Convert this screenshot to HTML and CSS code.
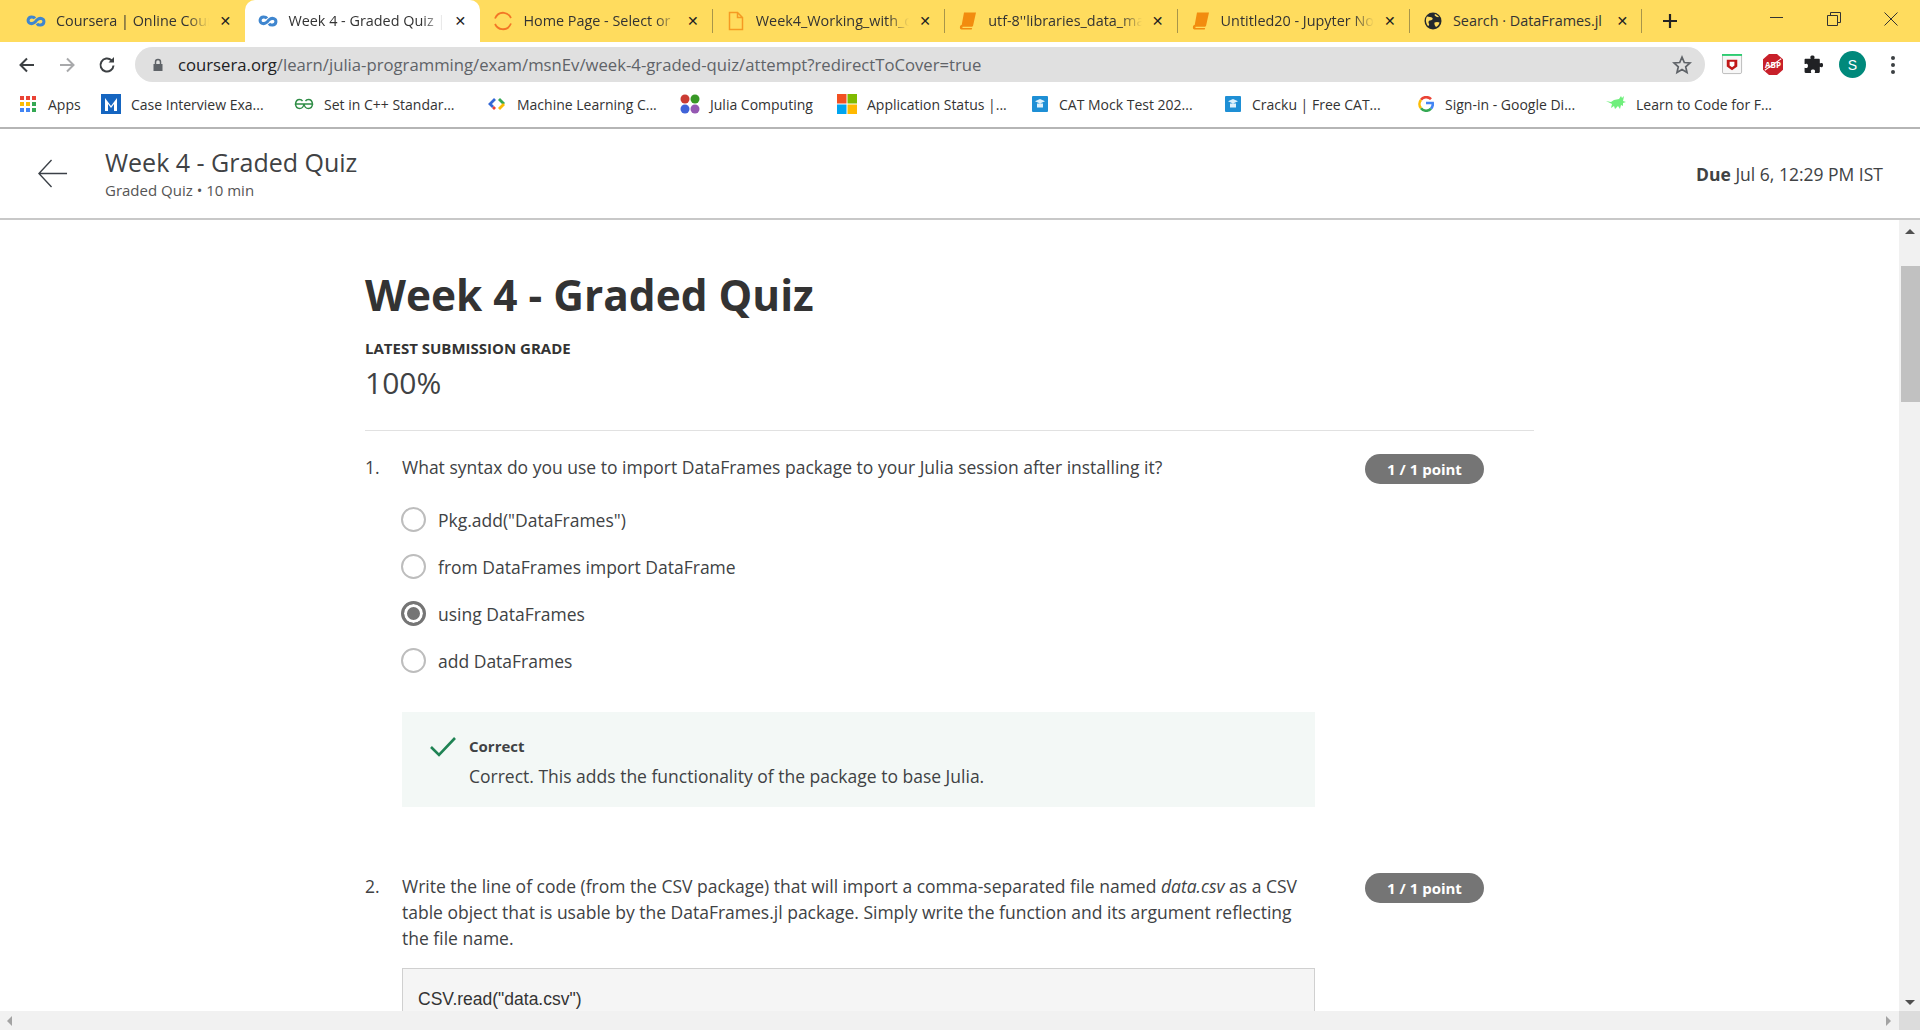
FILE: index.html
```html
<!DOCTYPE html>
<html lang="en">
<head>
    <meta charset="UTF-8">
    <title>Week 4 - Graded Quiz | Coursera</title>
    <link rel="stylesheet" href="styles.css">
</head>
<body>

    <div class="tabstrip">
        <div class="tab">
            <svg class="tab-icon" viewBox="0 0 20 20"><path class="infinity" d="M9 7.4C7.8 5.6 3 4.8 2.2 8.6c-.7 3.6 3.6 5.4 6.8 2.6l2-2.4c3.200-2.800 7.500-1 6.800 2.600-.8 3.800-5.600 3-6.800 1.200"/></svg>
            <span class="tab-title">Coursera | Online Cour</span>
            <span class="tab-close">✕</span>
        </div>
        <div class="tab tab-active">
            <svg class="tab-icon" viewBox="0 0 20 20"><path class="infinity" d="M9 7.4C7.8 5.6 3 4.8 2.2 8.6c-.7 3.6 3.6 5.4 6.8 2.6l2-2.4c3.200-2.800 7.500-1 6.800 2.600-.8 3.800-5.600 3-6.800 1.200"/></svg>
            <span class="tab-title">Week 4 - Graded Quiz |</span>
            <span class="tab-close">✕</span>
        </div>
        <div class="tab">
            <svg class="tab-icon" viewBox="0 0 20 20"><path class="swirl" d="M2 7.500C4 3 8 1.500 11 1.800c3 .3 5.500 2.200 7 5.200M18 12.500c-2 4.500-6 6-9 5.700-3-.3-5.500-2.200-7-5.200"/></svg>
            <span class="tab-title">Home Page - Select or</span>
            <span class="tab-close">✕</span>
        </div>
        <div class="tab">
            <svg class="tab-icon" viewBox="0 0 20 20"><path class="doc" d="M3.500 1.500h8l5 5v12h-13zM11.500 1.500v5h5"/></svg>
            <span class="tab-title">Week4_Working_with_c</span>
            <span class="tab-close">✕</span>
        </div>
        <div class="tab">
            <svg class="tab-icon" viewBox="0 0 20 20"><path class="book" d="M6 1.500h12l-3 13.500H3.500zM2 15.500c0-1 1-1.500 2-1.500h11l-.6 1.700H4.500l-.1 1.300h9.700l-.4 1.500H3.500C2.500 18.500 1.500 17.500 2 15.500z"/></svg>
            <span class="tab-title">utf-8''libraries_data_ma</span>
            <span class="tab-close">✕</span>
        </div>
        <div class="tab">
            <svg class="tab-icon" viewBox="0 0 20 20"><path class="book" d="M6 1.500h12l-3 13.500H3.500zM2 15.500c0-1 1-1.500 2-1.500h11l-.6 1.700H4.500l-.1 1.300h9.700l-.4 1.500H3.500C2.500 18.500 1.500 17.500 2 15.500z"/></svg>
            <span class="tab-title">Untitled20 - Jupyter No</span>
            <span class="tab-close">✕</span>
        </div>
        <div class="tab">
            <svg class="tab-icon" viewBox="0 0 20 20"><circle cx="10" cy="10" r="8.500" fill="#24292e"/><path fill="#ffdc5e" d="M4 5.500c2 .5 4 0 5.500 1.500.8 1.500-1 2.500-2.500 2.500S5 11.500 6 13c.5 1-.5 2-1 2C2.500 12 2.500 8 4 5.500zM12 3c1.500.5 3 1.500 4 3-1.500.5-3-.5-4-1.200-.5-.5-.5-1.300 0-1.800zM11.500 11.500c1.500-.8 3.500-.8 5 0-.4 2.200-1.800 3.700-3.500 4.500-1-1-2-3-1.500-4.500z"/></svg>
            <span class="tab-title tab-title-full">Search · DataFrames.jl</span>
            <span class="tab-close">✕</span>
        </div>
        <span class="new-tab">
            <svg viewBox="0 0 16 16"><path d="M8 1v14M1 8h14"/></svg>
        </span>
        <div class="window-controls">
            <svg viewBox="0 0 14 14"><path d="M0 5.500h13"/></svg>
            <svg viewBox="0 0 14 14"><path d="M.5 3.500h10v10H.5zM3.500 3.500V.5h10v10h-3"/></svg>
            <svg viewBox="0 0 14 14"><path d="M.5.5l13 13M13.500.5l-13 13"/></svg>
        </div>
    </div>

    <div class="toolbar">
        <svg class="nav-icon" viewBox="0 0 20 20"><path d="M17 10H4M10 3.500 3.500 10l6.500 6.500"/></svg>
        <svg class="nav-icon nav-disabled" viewBox="0 0 20 20"><path d="M3 10h13M10 3.500l6.500 6.500-6.500 6.500"/></svg>
        <svg class="nav-icon" viewBox="0 0 20 20"><path d="M16.500 10.500a6.500 6.500 0 1 1-2-5.200"/><path class="fill" d="M11.500 7.500H17V2z"/></svg>
        <div class="omnibox">
            <svg class="lock" viewBox="0 0 12 14"><path d="M1.500 6h9v7h-9z"/><path class="shackle" d="M3.500 6V4a2.500 2.500 0 0 1 5 0v2"/></svg>
            <span class="url"><span class="url-host">coursera.org</span>/learn/julia-programming/exam/msnEv/week-4-graded-quiz/attempt?redirectToCover=true</span>
            <svg class="star" viewBox="0 0 20 20"><path d="M10 2.200l2.300 5.300 5.700.5-4.300 3.800 1.300 5.600-5-3-5 3 1.300-5.600L2 8l5.700-.5z"/></svg>
        </div>
        <div class="extensions">
            <svg class="ext-icon" viewBox="0 0 22 22"><rect x=".5" y=".5" width="20" height="20" rx="1.500" fill="#f7f7f7" stroke="#bbb"/><path d="M0 0h21v2H0z" fill="#2ecc71"/><path d="M5 6h11v7l-5.500 4L5 13z" fill="#c01818"/><path d="M8 8h5v4l-2.500 2L8 12z" fill="#fff"/></svg>
            <span class="abp">ABP</span>
            <svg class="ext-icon" viewBox="0 0 20 20"><path fill="#202124" d="M7 2.500c.5-1.500 3.500-1.500 4 0 .2.700-.3 1.200-.3 2h4.300c.6 0 1 .4 1 1v3.300c.8 0 1.300-.5 2-.3 1.500.5 1.500 3.500 0 4-.7.200-1.200-.3-2-.3V17c0 .6-.4 1-1 1h-3.800c0-.8.500-1.300.300-2-.5-1.500-3.500-1.500-4 0-.2.700.3 1.200.3 2H2.500c-.6 0-1-.4-1-1v-4c.8 0 1.400.500 2.100.300 1.500-.5 1.500-3.500 0-4C2.900 9.100 2.300 9.600 1.500 9.600V5.500c0-.6.400-1 1-1H7.300C7.300 3.700 6.800 3.200 7 2.500z"/></svg>
            <span class="avatar">S</span>
            <span class="menu-dots"><i></i><i></i><i></i></span>
        </div>
    </div>

    <div class="bookmarks">
        <div class="bookmark bookmark-apps">
            <svg viewBox="0 0 16 16"><g fill="#ea4335"><rect width="4" height="4"/><rect x="6" width="4" height="4"/><rect x="12" width="4" height="4"/></g><g fill="#fbbc05"><rect y="6" width="4" height="4"/><rect x="6" y="6" width="4" height="4"/></g><rect x="12" y="6" width="4" height="4" fill="#34a853"/><g fill="#4285f4"><rect y="12" width="4" height="4"/><rect x="6" y="12" width="4" height="4"/></g><rect x="12" y="12" width="4" height="4" fill="#34a853"/></svg>
            <span>Apps</span>
        </div>
        <div class="bookmark">
            <svg viewBox="0 0 20 20"><rect width="20" height="20" fill="#1565c0"/><path d="M4 17V4l6 8 6-8v13h-3V10l-3 4-3-4v7z" fill="#fff"/></svg>
            <span>Case Interview Exa...</span>
        </div>
        <div class="bookmark">
            <svg viewBox="0 0 20 20" fill="none" stroke="#2f8d46" stroke-width="1.500"><path d="M10 10H1.500c.3-3 2-4.500 4-4.500 1.500 0 2.500.7 3 1.700M1.500 10c.3 3 2 4.500 4 4.500S9.500 13 10 10M10 10h8.500c-.3-3-2-4.500-4-4.500-1.500 0-2.500.7-3 1.700M18.500 10c-.3 3-2 4.500-4 4.500S10.500 13 10 10"/></svg>
            <span>Set in C++ Standar...</span>
        </div>
        <div class="bookmark">
            <svg viewBox="0 0 20 20" fill="none" stroke-width="2.800"><path d="M8 5 3 10l3 3" stroke="#3367d6"/><path d="M6 13l2 2" stroke="#ea4335"/><path d="M12 5l5 5" stroke="#34a853"/><path d="M17 10l-5 5" stroke="#fbbc05"/></svg>
            <span>Machine Learning C...</span>
        </div>
        <div class="bookmark bookmark-short">
            <svg viewBox="0 0 20 20"><circle cx="5" cy="5" r="4.500" fill="#cb3c33"/><circle cx="15" cy="5" r="4.500" fill="#389826"/><circle cx="5" cy="15" r="4.500" fill="#4063d8"/><circle cx="15" cy="15" r="4.500" fill="#9558b2"/></svg>
            <span>Julia Computing</span>
        </div>
        <div class="bookmark">
            <svg viewBox="0 0 20 20"><rect width="9.500" height="9.500" fill="#f25022"/><rect x="10.500" width="9.500" height="9.500" fill="#7fba00"/><rect y="10.500" width="9.500" height="9.500" fill="#00a4ef"/><rect x="10.500" y="10.500" width="9.500" height="9.500" fill="#ffb900"/></svg>
            <span>Application Status |...</span>
        </div>
        <div class="bookmark bookmark-small">
            <svg viewBox="0 0 16 16"><rect width="16" height="16" rx="1" fill="#1e8fd5"/><path d="M8 3l5 2.200-5 2.200-5-2.200zM5 7.500h6v4H5z" fill="#dff1fb"/></svg>
            <span>CAT Mock Test 202...</span>
        </div>
        <div class="bookmark bookmark-small">
            <svg viewBox="0 0 16 16"><rect width="16" height="16" rx="1" fill="#1e8fd5"/><path d="M8 3l5 2.200-5 2.200-5-2.200zM5 7.500h6v4H5z" fill="#dff1fb"/></svg>
            <span>Cracku | Free CAT...</span>
        </div>
        <div class="bookmark bookmark-small bookmark-google">
            <svg viewBox="0 0 16 16" fill="none" stroke-width="2.600"><path d="M13 3.200A6.500 6.500 0 0 0 3 3.800" stroke="#ea4335"/><path d="M3 3.800a6.500 6.500 0 0 0 0 8.400" stroke="#fbbc05"/><path d="M3 12.200a6.500 6.500 0 0 0 10 .4" stroke="#34a853"/><path d="M13 12.600A6.500 6.500 0 0 0 14.700 7H8" stroke="#4285f4"/></svg>
            <span>Sign-in - Google Di...</span>
        </div>
        <div class="bookmark">
            <svg viewBox="0 0 20 16"><path fill="#6fef7c" d="M0 5l5 1 3-2 5-1 2-3 1 2 2-2-1 5 3 1-3 1v3l-2-1-1 4-2-3-3 3-1-3-3 2 1-4z"/></svg>
            <span>Learn to Code for F...</span>
        </div>
    </div>

    <header class="page-header">
        <svg class="back-arrow" viewBox="0 0 32 32"><path d="M31 16H2M15 2 2 16l13 14"/></svg>
        <div class="page-heading">
            <div class="page-title">Week 4 - Graded Quiz</div>
            <div class="page-subtitle">Graded Quiz • 10 min</div>
        </div>
        <div class="due"><b>Due</b> Jul 6, 12:29 PM IST</div>
    </header>

    <div class="viewport">
        <main class="content">
            <h1>Week 4 - Graded Quiz</h1>
            <div class="grade-label">LATEST SUBMISSION GRADE</div>
            <div class="grade-value">100%</div>
            <hr class="rule">

            <section class="question">
                <div class="question-num">1.</div>
                <div class="question-body">
                    <p class="question-text">What syntax do you use to import DataFrames package to your Julia session after installing it?</p>
                    <div class="options">
                        <div class="option"><span class="radio"></span>Pkg.add("DataFrames")</div>
                        <div class="option"><span class="radio"></span>from DataFrames import DataFrame</div>
                        <div class="option"><span class="radio radio-on"></span>using DataFrames</div>
                        <div class="option"><span class="radio"></span>add DataFrames</div>
                    </div>
                    <div class="feedback">
                        <svg class="check" viewBox="0 0 26 20"><path d="M1 10l8 8L25 1"/></svg>
                        <div>
                            <div class="feedback-title">Correct</div>
                            <div class="feedback-text">Correct. This adds the functionality of the package to base Julia.</div>
                        </div>
                    </div>
                </div>
                <span class="points">1 / 1 point</span>
            </section>

            <section class="question question-second">
                <div class="question-num">2.</div>
                <div class="question-body">
                    <p class="question-text">Write the line of code (from the CSV package) that will import a comma-separated file named <em>data.csv</em> as a CSV table object that is usable by the DataFrames.jl package. Simply write the function and its argument reflecting the file name.</p>
                    <div class="answer-box">CSV.read("data.csv")</div>
                </div>
                <span class="points">1 / 1 point</span>
            </section>
        </main>
        <div class="scrollbar-v">
            <span class="arrow-up"></span>
            <span class="thumb"></span>
            <span class="arrow-down"></span>
        </div>
    </div>

    <div class="scrollbar-h">
        <span class="arrow-left"></span>
        <span class="arrow-right"></span>
        <span class="corner"></span>
    </div>

</body>
</html>
```

FILE: styles.css
```css
* { box-sizing: border-box; }
html, body { height: 100%; }
body {
    margin: 0;
    display: flex;
    flex-direction: column;
    overflow: hidden;
    background: #fff;
    color: #404244;
    font-family: 'Open Sans', sans-serif;
}

/* browser chrome */
.tabstrip { display: flex; align-items: stretch; height: 42px; flex: none; padding-left: 13px; background: #ffdc5e; }
.tab { position: relative; display: flex; align-items: center; width: 232.4px; padding: 0 12px 1px 13px; color: #333; font-size: 14.4px; }
.tab::after { content: ""; position: absolute; right: 0; top: 9px; width: 1px; height: 24px; background: #a8954a; }
.tab:first-child::after, .tab-active::after { display: none; }
.tab-active { width: 235px; background: #fff; border-radius: 10px 10px 0 0; }
.tab-icon { width: 20px; height: 20px; flex: none; }
.infinity { fill: none; stroke: #3f86cf; stroke-width: 3; }
.swirl { fill: none; stroke: #f37626; stroke-width: 1.800; }
.doc { fill: none; stroke: #f59a23; stroke-width: 1.500; }
.book { fill: #f28c0f; }
.tab-title {
    flex: 1;
    min-width: 0;
    margin-left: 10px;
    white-space: nowrap;
    -webkit-mask-image: linear-gradient(to right, #000 86%, transparent 100%);
    mask-image: linear-gradient(to right, #000 86%, transparent 100%);
}
.tab-title-full { -webkit-mask-image: none; mask-image: none; }
.tab-close { width: 16px; margin-left: 8px; flex: none; text-align: center; font-size: 14px; font-weight: 700; color: #222; font-family: 'DejaVu Sans', sans-serif; }
.new-tab { display: flex; align-items: center; margin-left: 20px; }
.new-tab svg { width: 16px; height: 16px; fill: none; stroke: #222; stroke-width: 2.200; }
.window-controls { display: flex; gap: 43px; margin-left: auto; padding: 12px 22px 0 0; }
.window-controls svg { width: 14px; height: 14px; fill: none; stroke: #333; stroke-width: 1; }

.toolbar { display: flex; align-items: center; height: 43px; flex: none; padding: 2px 0 0 17px; background: #fff; }
.nav-icon { width: 20px; height: 20px; margin-right: 20px; fill: none; stroke: #3c4043; stroke-width: 2; flex: none; }
.nav-icon .fill { fill: #3c4043; stroke: none; }
.nav-disabled { stroke: #a8a9ab; }
.omnibox { display: flex; align-items: center; width: 1570px; height: 35px; margin-left: -2px; padding: 0 13px 0 17px; background: #e0e0e0; border-radius: 18px; }
.lock { width: 12px; height: 14px; flex: none; fill: #5f6368; }
.lock .shackle { fill: none; stroke: #5f6368; stroke-width: 1.500; }
.url { flex: 1; margin-left: 14px; font-size: 16.7px; color: #5f6368; white-space: nowrap; }
.url-host { color: #202124; }
.star { width: 20px; height: 20px; fill: none; stroke: #5f6368; stroke-width: 1.700; flex: none; }
.extensions { display: flex; align-items: center; margin-left: 17px; }
.ext-icon { width: 21px; height: 21px; flex: none; }
.abp { position: relative; display: flex; align-items: center; justify-content: center; width: 20px; height: 21px; margin-left: 20px; margin-right: 20px; background: #c8202a; color: #fff; font-size: 8px; font-weight: 700; clip-path: polygon(30% 0, 70% 0, 100% 25%, 100% 75%, 70% 100%, 30% 100%, 0 75%, 0 25%); }
.abp::after { content: ""; position: absolute; left: 0; right: 0; top: 10px; height: 1px; background: #fff; transform: rotate(-35deg); }
.avatar { display: flex; align-items: center; justify-content: center; width: 27px; height: 27px; margin-left: 15px; border-radius: 50%; background: #00897b; color: #fff; font-size: 14px; font-family: 'Liberation Sans', sans-serif; }
.menu-dots { display: flex; flex-direction: column; gap: 3px; margin-left: 25px; }
.menu-dots i { display: block; width: 4px; height: 4px; border-radius: 50%; background: #3c4043; }

.bookmarks { display: flex; align-items: center; height: 44px; flex: none; padding: 0 0 4px 20px; border-bottom: 2px solid #b5b5b5; font-size: 14px; color: #333; }
.bookmark { display: flex; align-items: center; width: 193px; flex: none; white-space: nowrap; }
.bookmark svg { width: 20px; height: 20px; margin-right: 10px; flex: none; }
.bookmark-apps { width: 81px; }
.bookmark-apps svg { width: 16px; height: 16px; margin-right: 12px; }
.bookmark-short { width: 157px; }
.bookmark-small svg { width: 16px; height: 16px; margin-left: 2px; margin-right: 11px; }
.bookmark-google { width: 190px; }

/* page header */
.page-header { display: flex; align-items: center; height: 91px; flex: none; padding: 0 37px 0 37px; border-bottom: 2px solid #c8c8c8; }
.back-arrow { width: 31px; height: 31px; fill: none; stroke: #3b4047; stroke-width: 1.400; flex: none; }
.page-heading { margin-left: 37px; margin-bottom: 2px; }
.page-title { font-size: 25px; line-height: 32px; }
.page-subtitle { margin-top: 2px; font-size: 15px; line-height: 20px; color: #555; }
.due { margin-left: auto; font-size: 17.5px; }

/* quiz */
.viewport { display: flex; flex: 1; min-height: 0; overflow: hidden; }
.content { flex: 1; min-width: 0; }
.content > * { width: 1169px; margin-left: auto; margin-right: auto; }
h1 { margin-top: 50px; margin-bottom: 0; font-size: 42.4px; line-height: 50px; font-weight: 700; color: #333; }
.grade-label { margin-top: 18px; font-size: 15px; line-height: 20px; font-weight: 700; color: #333; }
.grade-value { margin-top: 5px; font-size: 30px; line-height: 40px; }
.rule { margin-top: 27px; margin-bottom: 0; border: 0; border-top: 1px solid #e1e1e1; }

.question { display: flex; align-items: flex-start; margin-top: 23px; }
.question-second { margin-top: 66px; }
.question-num { width: 37px; flex: none; font-size: 17.5px; line-height: 26px; }
.question-body { width: 913px; flex: none; }
.question-text { margin: 0; font-size: 17.5px; line-height: 26px; }
.points { display: flex; align-items: center; justify-content: center; width: 119px; height: 30px; margin-left: 50px; border-radius: 15px; background: #757575; color: #fff; font-size: 15px; font-weight: 700; flex: none; }

.options { margin-top: 16px; }
.option { display: flex; align-items: center; height: 47px; font-size: 17.5px; }
.radio { width: 25px; height: 25px; margin-right: 12px; margin-left: -1px; border: 2px solid #bdbdbd; border-radius: 50%; flex: none; }
.radio-on { border: 3px solid #757575; background: #757575; box-shadow: inset 0 0 0 3px #fff; }

.feedback { display: flex; height: 95px; margin-top: 28px; padding: 22px 0 0 28px; background: #f3f8f6; }
.check { width: 26px; height: 20px; margin-top: 3px; margin-right: 13px; fill: none; stroke: #1f8354; stroke-width: 2.600; flex: none; }
.feedback-title { font-size: 15px; line-height: 24px; font-weight: 700; }
.feedback-text { margin-top: 6px; font-size: 17.5px; line-height: 24px; }

.answer-box { height: 80px; margin-top: 17px; padding: 18px 15px; border: 1px solid #d0d0d0; background: #f5f5f5; font-family: 'Liberation Sans', sans-serif; font-size: 17.5px; line-height: 24px; color: #333; }

/* scrollbars */
.scrollbar-v { position: relative; width: 21px; flex: none; background: #f1f1f1; }
.thumb { position: absolute; left: 2px; right: 0; top: 46px; height: 136px; background: #c1c1c1; }
.arrow-up, .arrow-down { position: absolute; left: 6px; width: 0; height: 0; border-left: 5px solid transparent; border-right: 5px solid transparent; }
.arrow-up { top: 9px; border-bottom: 5px solid #505050; }
.arrow-down { bottom: 6px; border-top: 5px solid #505050; }
.scrollbar-h { display: flex; align-items: center; height: 19px; flex: none; background: #f1f1f1; }
.arrow-left { width: 0; height: 0; margin-left: 7px; border-top: 5px solid transparent; border-bottom: 5px solid transparent; border-right: 5px solid #a3a3a3; }
.arrow-right { width: 0; height: 0; margin-left: auto; margin-right: 8px; border-top: 5px solid transparent; border-bottom: 5px solid transparent; border-left: 5px solid #a3a3a3; }
.corner { width: 21px; height: 19px; background: #dcdcdc; }
```
